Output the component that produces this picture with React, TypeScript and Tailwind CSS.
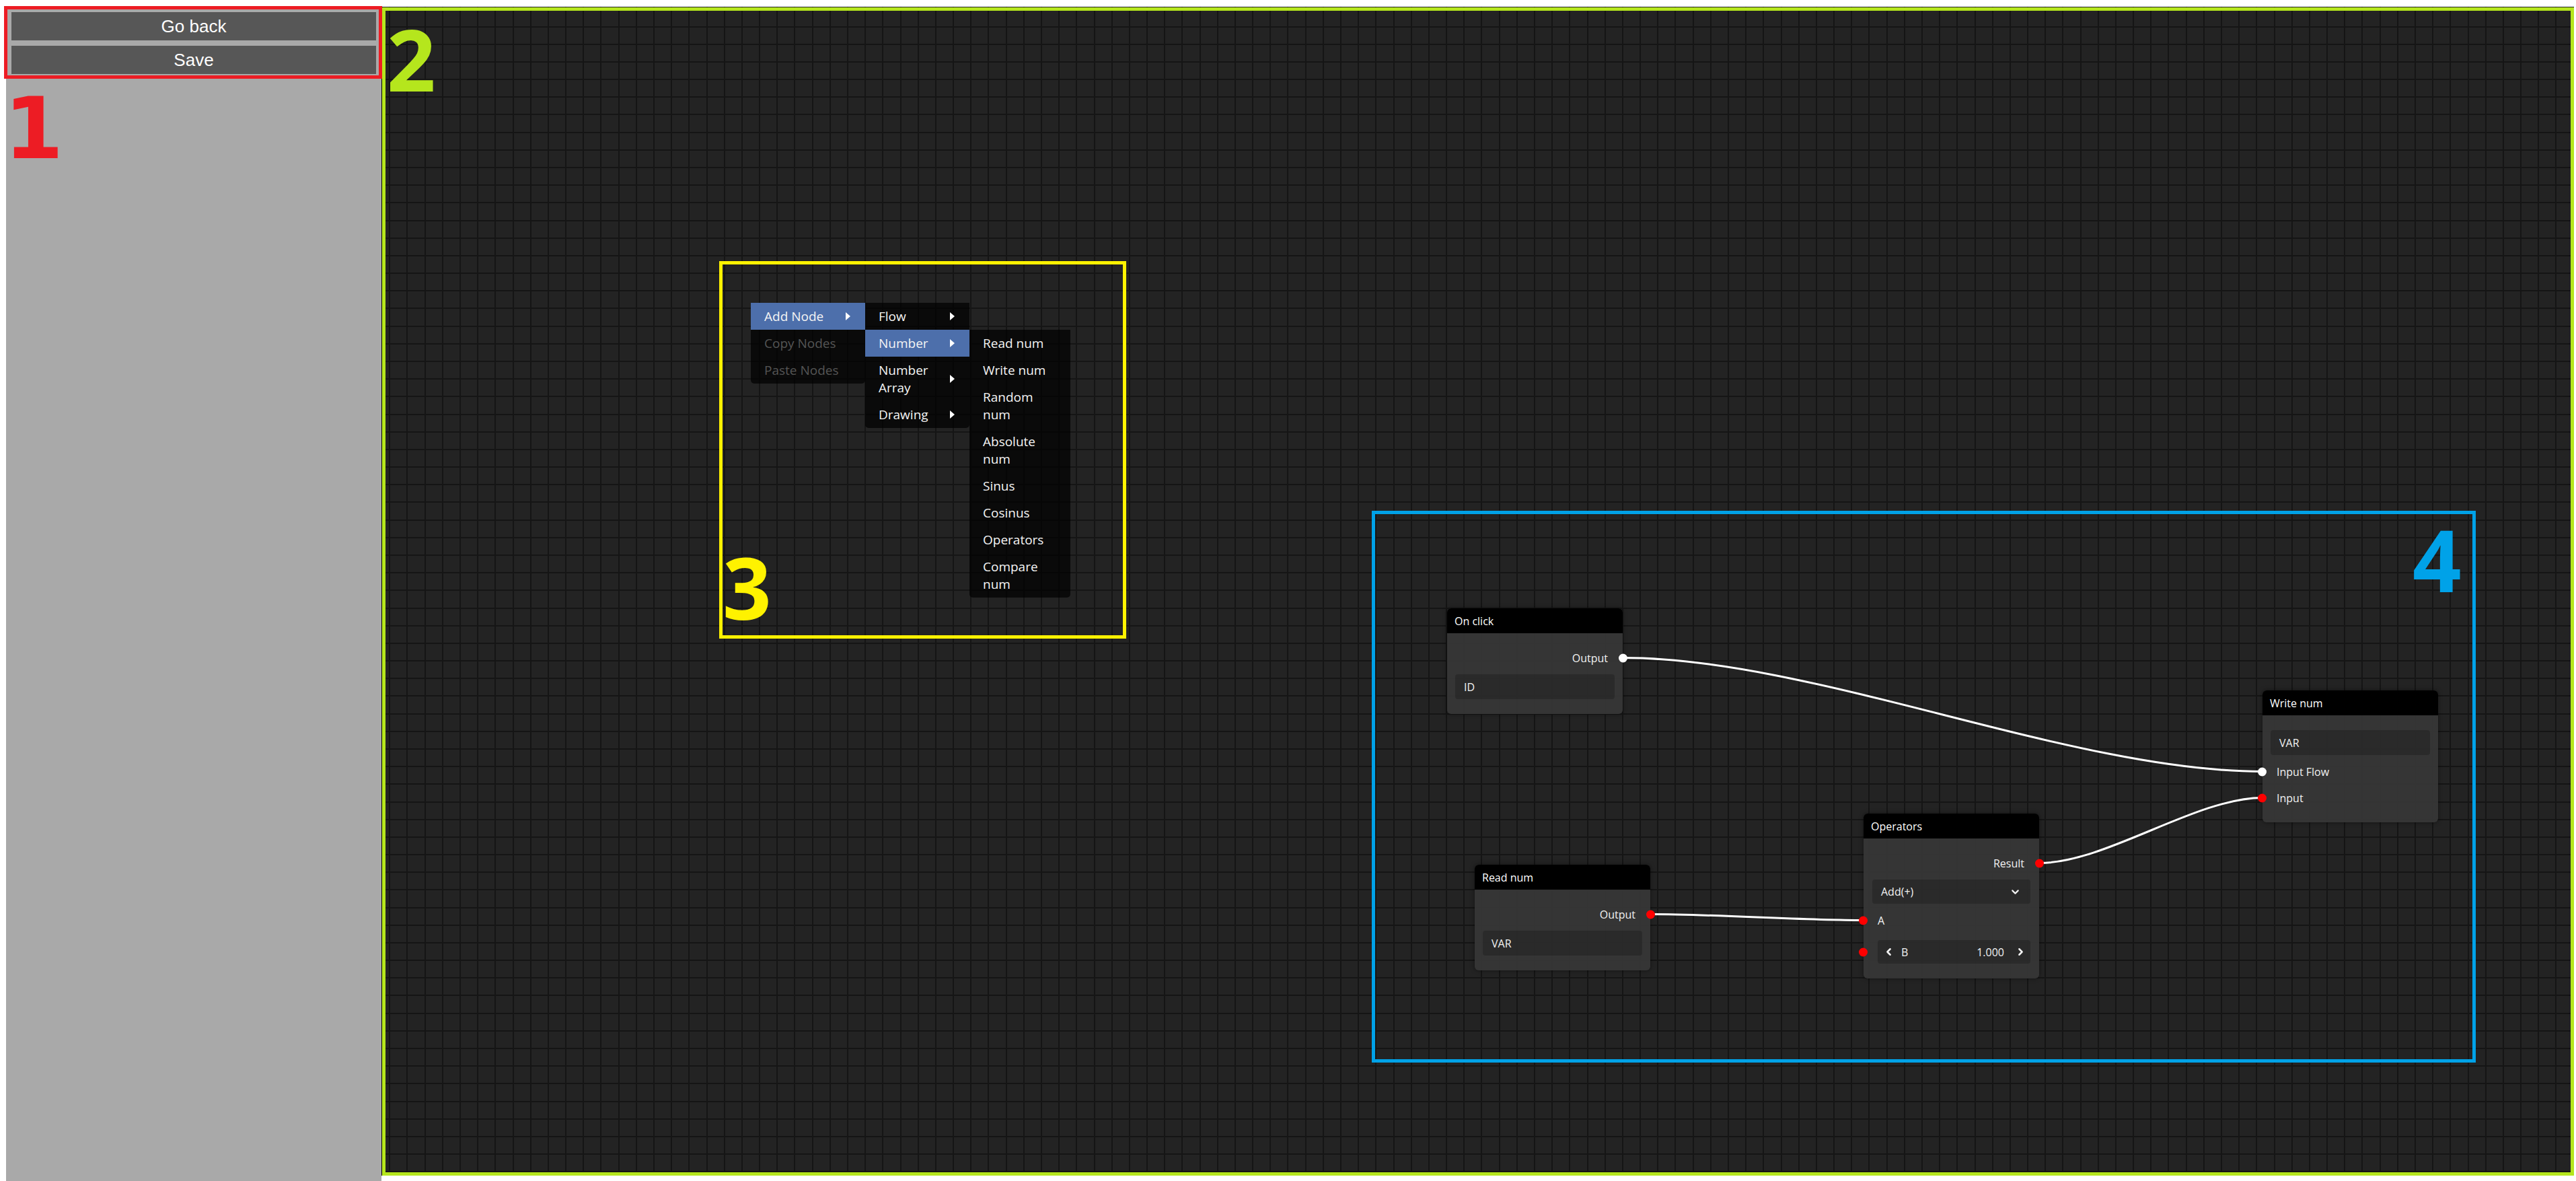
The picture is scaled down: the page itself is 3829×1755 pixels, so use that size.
import React from 'react';
import { ChevronDown, ChevronLeft, ChevronRight } from 'lucide-react';

type Item =
  | { kind: 'output'; label: string; color: string }
  | { kind: 'input'; label: string; color: string }
  | { kind: 'option'; label: string }
  | { kind: 'select'; label: string }
  | { kind: 'number'; label: string; value: string; color: string };

type NodeDef = { id: string; title: string; x: number; y: number; items: Item[] };

const W = 261;
const HEADER = 37;
const PAD_T = 22;
const GAP = 10;

const heightOf = (it: Item) =>
  it.kind === 'output' || it.kind === 'input' ? 29 : it.kind === 'option' ? 37 : it.kind === 'number' ? 40 : 36;

const nodes: NodeDef[] = [
  {
    id: 'click',
    title: 'On click',
    x: 1582,
    y: 894,
    items: [
      { kind: 'output', label: 'Output', color: 'white' },
      { kind: 'option', label: 'ID' },
    ],
  },
  {
    id: 'read',
    title: 'Read num',
    x: 1623,
    y: 1275,
    items: [
      { kind: 'output', label: 'Output', color: 'red' },
      { kind: 'option', label: 'VAR' },
    ],
  },
  {
    id: 'ops',
    title: 'Operators',
    x: 2201,
    y: 1199,
    items: [
      { kind: 'output', label: 'Result', color: 'red' },
      { kind: 'select', label: 'Add(+)' },
      { kind: 'input', label: 'A', color: 'red' },
      { kind: 'number', label: 'B', value: '1.000', color: 'red' },
    ],
  },
  {
    id: 'write',
    title: 'Write num',
    x: 2794,
    y: 1016,
    items: [
      { kind: 'option', label: 'VAR' },
      { kind: 'input', label: 'Input Flow', color: 'white' },
      { kind: 'input', label: 'Input', color: 'red' },
    ],
  },
];

const links: [string, string, string, string][] = [
  ['click', 'Output', 'write', 'Input Flow'],
  ['read', 'Output', 'ops', 'A'],
  ['ops', 'Result', 'write', 'Input'],
];

function socketPos(nodeId: string, label: string): [number, number] {
  const n = nodes.find((d) => d.id === nodeId)!;
  let y = n.y + HEADER + PAD_T;
  for (const it of n.items) {
    const h = heightOf(it);
    if ('label' in it && it.label === label) {
      return [it.kind === 'output' ? n.x + W : n.x, y + h / 2];
    }
    y += h + GAP;
  }
  return [n.x, n.y];
}

const Dot = ({ color, side }: { color: string; side: 'left' | 'right' }) => (
  <span
    className={`absolute top-1/2 -translate-y-1/2 w-[13px] h-[13px] rounded-full ${
      color === 'white' ? 'bg-white' : 'bg-[#ff0000]'
    } ${side === 'left' ? '-left-[7px]' : '-right-[7px]'}`}
  />
);

const NodeRow = ({ it }: { it: Item }) => {
  if (it.kind === 'output')
    return (
      <div className="relative h-[29px] flex items-center justify-end pr-[22px]">
        <span>{it.label}</span>
        <Dot color={it.color} side="right" />
      </div>
    );
  if (it.kind === 'input')
    return (
      <div className="relative h-[29px] flex items-center pl-[21px]">
        <span>{it.label}</span>
        <Dot color={it.color} side="left" />
      </div>
    );
  if (it.kind === 'option')
    return (
      <div className="mx-[12px] h-[37px] rounded-[4px] bg-black/20 flex items-center pl-[13px]">
        {it.label}
      </div>
    );
  if (it.kind === 'select')
    return (
      <div className="mx-[13px] h-[36px] rounded-[4px] bg-black/20 flex items-center justify-between pl-[13px] pr-[14px]">
        <span>{it.label}</span>
        <ChevronDown size={17} strokeWidth={3} />
      </div>
    );
  return (
    <div className="relative h-[40px] pt-[5px]">
      <span className="absolute top-[23px] -translate-y-1/2 -left-[7px] w-[13px] h-[13px] rounded-full bg-[#ff0000]" />
      <div className="ml-[21px] mr-[13px] h-[35px] rounded-[4px] bg-black/20 flex items-center pl-[8px] pr-[6px]">
        <ChevronLeft size={17} strokeWidth={3.5} />
        <span className="ml-[10px]">{it.label}</span>
        <span className="ml-auto mr-[16px]">{it.value}</span>
        <ChevronRight size={17} strokeWidth={3.5} />
      </div>
    </div>
  );
};

const GraphNode = ({ n }: { n: NodeDef }) => (
  <div
    className="absolute w-[261px] rounded-[6px] bg-[rgba(55,55,55,0.93)] shadow-[0_0_6px_rgba(0,0,0,0.5)] text-[16px] text-[#f2f2f2]"
    style={{ left: n.x, top: n.y }}
  >
    <div className="h-[37px] rounded-t-[6px] bg-black flex items-center px-[11px] text-white">{n.title}</div>
    <div className="pt-[22px] pb-[22px] flex flex-col gap-[10px]">
      {n.items.map((it, i) => (
        <NodeRow key={i} it={it} />
      ))}
    </div>
  </div>
);

const Arrow = () => (
  <span className="w-0 h-0 border-y-[6px] border-y-transparent border-l-[7px] border-l-white shrink-0" />
);

const MenuItem = ({
  children,
  active,
  disabled,
  arrow,
}: {
  children: React.ReactNode;
  active?: boolean;
  disabled?: boolean;
  arrow?: boolean;
}) => (
  <div
    className={`flex items-center justify-between pl-[20px] pr-[22px] py-[7px] leading-[26px] ${
      active ? 'bg-[#4d6fab]' : ''
    } ${disabled ? 'text-[#555555]' : 'text-[#f4f4f4]'}`}
  >
    <span>{children}</span>
    {arrow && <Arrow />}
  </div>
);

const ContextMenu = () => (
  <div className="absolute left-[547px] top-[440px] flex items-start text-[19px]">
    <div className="w-[170px] bg-black/70 rounded-b-[5px]">
      <MenuItem active arrow>
        Add Node
      </MenuItem>
      <MenuItem disabled>Copy Nodes</MenuItem>
      <MenuItem disabled>Paste Nodes</MenuItem>
    </div>
    <div className="w-[155px] bg-black/70 rounded-b-[5px]">
      <MenuItem arrow>Flow</MenuItem>
      <MenuItem active arrow>
        Number
      </MenuItem>
      <MenuItem arrow>
        Number
        <br />
        Array
      </MenuItem>
      <MenuItem arrow>Drawing</MenuItem>
    </div>
    <div className="w-[150px] mt-[40px] bg-black/70 rounded-b-[5px]">
      <MenuItem>Read num</MenuItem>
      <MenuItem>Write num</MenuItem>
      <MenuItem>
        Random
        <br />
        num
      </MenuItem>
      <MenuItem>
        Absolute
        <br />
        num
      </MenuItem>
      <MenuItem>Sinus</MenuItem>
      <MenuItem>Cosinus</MenuItem>
      <MenuItem>Operators</MenuItem>
      <MenuItem>
        Compare
        <br />
        num
      </MenuItem>
    </div>
  </div>
);

export default function App() {
  return (
    <div className="relative w-[3829px] h-[1755px] bg-white overflow-hidden font-['Open_Sans',sans-serif]">
      <div className="flex pl-[9px] pt-[10px]">
        <aside className="w-[558px] h-[1745px] bg-[#a9a9a9] px-[8px] pt-[8px] flex flex-col gap-[8px] font-['Liberation_Sans',Arial,sans-serif] text-[26px] text-white">
          <button className="h-[42px] bg-[#575757] flex items-center justify-center">Go back</button>
          <button className="h-[42px] bg-[#575757] flex items-center justify-center">Save</button>
        </aside>
        <main className="relative w-[3259px] h-[1737px] border-l-2 border-black bg-[#232323] overflow-hidden [background-image:repeating-linear-gradient(to_right,transparent_0_9.3px,#151515_9.3px_11.3px,transparent_11.3px_26.18px),repeating-linear-gradient(to_bottom,transparent_0_2.4px,#151515_2.4px_4.4px,transparent_4.4px_26.18px)]">
          <svg className="absolute inset-0 w-full h-full pointer-events-none">
            {links.map(([a, ao, b, bi], i) => {
              const [x1, y1] = socketPos(a, ao);
              const [x2, y2] = socketPos(b, bi);
              const dx = 0.3 * Math.abs(x2 - x1);
              return (
                <path
                  key={i}
                  d={`M ${x1} ${y1} C ${x1 + dx} ${y1}, ${x2 - dx} ${y2}, ${x2} ${y2}`}
                  stroke="white"
                  strokeWidth={3}
                  fill="none"
                />
              );
            })}
          </svg>
          {nodes.map((n) => (
            <GraphNode key={n.id} n={n} />
          ))}
          <ContextMenu />
        </main>
      </div>

      {/* annotation boxes */}
      <div className="absolute left-[6px] top-[9px] w-[562px] h-[108px] border-[5px] border-[#ed1c24] pointer-events-none" />
      <div className="absolute left-[568px] top-[11px] w-[3258px] h-[1736px] border-[5px] border-[#b5e61d] pointer-events-none" />
      <div className="absolute left-[1069px] top-[388px] w-[605px] h-[561px] border-[5px] border-[#fff200] pointer-events-none" />
      <div className="absolute left-[2039px] top-[759px] w-[1641px] h-[820px] border-[5px] border-[#00a2e8] pointer-events-none" />
      <span className="absolute left-[6px] top-[128px] text-[127px] leading-none font-bold text-[#ed1c24] font-['DejaVu_Sans',sans-serif]">1</span>
      <span className="absolute left-[575px] top-[23px] text-[127px] leading-none font-bold text-[#b5e61d]">2</span>
      <span className="absolute left-[1074px] top-[808px] text-[127px] leading-none font-bold text-[#fff200]">3</span>
      <span className="absolute left-[3586px] top-[767px] text-[127px] leading-none font-bold text-[#00a2e8]">4</span>
    </div>
  );
}
